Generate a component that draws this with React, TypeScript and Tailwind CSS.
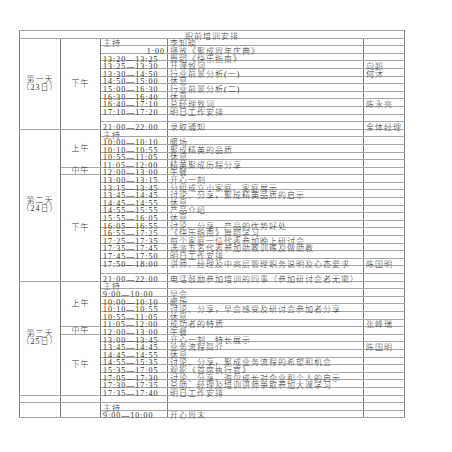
type Row = {
  day?: string[]
  daySpan?: number
  period?: string
  periodSpan?: number
  time: string
  right?: boolean
  task: string
  who?: string
}

// 职前培训日程
const rows: Row[] = [
  { day: ["第一天", "（23日）"], daySpan: 12, period: "下午", periodSpan: 12, time: "主持", task: "李知晓" },
  { time: "1:00", right: true, task: "播放《聚成周年庆典》" },
  { time: "13:20—13:25", task: "舞蹈《快乐指南》" },
  { time: "13:25—13:30", task: "开课致词", who: "向超" },
  { time: "13:30—14:50", task: "行业前景分析(一)", who: "何沐" },
  { time: "14:50—15:00", task: "休息" },
  { time: "15:00—16:30", task: "行业前景分析(二)" },
  { time: "16:30—16:40", task: "休息" },
  { time: "16:40—17:10", task: "总经理致词", who: "陈永亮" },
  { time: "17:10—17:20", task: "明日工作安排" },
  { time: "", task: "" },
  { time: "21:00—22:00", task: "录取通知", who: "全体经理" },

  { day: ["第二天", "（24日）"], daySpan: 20, period: "上午", periodSpan: 5, time: "主持", task: "" },
  { time: "10:00—10:10", task: "暖场" },
  { time: "10:10—10:55", task: "聚成精英的品质" },
  { time: "10:55—11:05", task: "休息" },
  { time: "11:05—12:00", task: "精英聚成历程分享" },
  { period: "中午", periodSpan: 1, time: "12:00—13:00", task: "午餐" },
  { period: "下午", periodSpan: 14, time: "13:00—13:15", task: "开心一刻" },
  { time: "13:15—13:45", task: "分组成立小家庭、家庭展示" },
  { time: "13:45—14:45", task: "讨论、分享，聚成精英品质的启示" },
  { time: "14:45—14:55", task: "休息" },
  { time: "14:55—15:55", task: "产品介绍" },
  { time: "15:55—16:05", task: "休息" },
  { time: "16:05—16:55", task: "讨论、分享，产品的优势好处" },
  { time: "16:55—17:25", task: "《快乐指南》舞蹈学习" },
  { time: "17:25—17:35", task: "每个家庭一位代表参加晚上研讨会" },
  { time: "17:35—17:45", task: "选派五名代表参加助教训练及做助教" },
  { time: "17:45—17:50", task: "明日工作安排" },
  { time: "17:50—18:00", task: "讲师、经理及中高层管理职务说明及心态要求", who: "陈国明" },
  { time: "", task: "" },
  { time: "21:00—22:00", task: "电话鼓励参加培训的同事（参加研讨会者无需）" },

  { day: ["第三天", "（25日）"], daySpan: 15, period: "上午", periodSpan: 6, time: "主持", task: "" },
  { time: "9:00—10:00", task: "早会" },
  { time: "10:00—10:10", task: "暖场" },
  { time: "10:10—10:55", task: "讨论、分享，早会感受及研讨会参加者分享" },
  { time: "10:55—11:05", task: "休息" },
  { time: "11:05—12:00", task: "成功者的特质", who: "张峰瑞" },
  { period: "中午", periodSpan: 1, time: "12:00—13:00", task: "午餐" },
  { period: "下午", periodSpan: 8, time: "13:00—13:45", task: "开心一刻、特长展示" },
  { time: "13:45—14:45", task: "业务流程简介", who: "陈国明" },
  { time: "14:45—14:55", task: "休息" },
  { time: "14:55—15:35", task: "讨论、分享，聚成业务流程的希望和机会" },
  { time: "15:35—17:05", task: "观影《首席执行官》" },
  { time: "17:05—17:30", task: "讨论、分享，海尔成长对企业和个人的启示" },
  { time: "17:30—17:35", task: "总助、经理及培训讲师争取参加大课学习" },
  { time: "17:35—17:40", task: "明日工作安排" },
  { day: [], daySpan: 1, period: "", periodSpan: 1, time: "", task: "" },

  { day: [], daySpan: 2, period: "", periodSpan: 2, time: "主持", task: "" },
  { time: "9:00—10:00", task: "开心周末" },
]

const cell = "border border-y-[#a6a6a6] border-x-[#7a7a7a] p-0 h-[7.6px] leading-[5px] whitespace-nowrap"

function Txt({ children }: { children: React.ReactNode }) {
  return <span className="inline-block translate-y-[1.5px]">{children}</span>
}

export default function App() {
  return (
    <div className="w-[452px] h-[452px] bg-white pt-[30px] pl-[19px] font-['Liberation_Serif','Noto_Sans_CJK_SC',serif] font-light text-[8px] tracking-[1px] text-[#333]">
      <table className="table-fixed border-collapse w-[385px] border border-[#7a7a7a]">
        <colgroup>
          <col className="w-[41px]" />
          <col className="w-[40px]" />
          <col className="w-[67px]" />
          <col className="w-[196px]" />
          <col className="w-[41px]" />
        </colgroup>
        <tbody>
          <tr className="h-[7.6px]">
            <td colSpan={5} className={`${cell} text-center`}>
              <Txt>职前培训安排</Txt>
            </td>
          </tr>
          {rows.map((r, i) => (
            <tr key={i} className="h-[7.6px]">
              {r.day && (
                <td rowSpan={r.daySpan} className={`${cell} text-center align-middle leading-[8px]`}>
                  {r.day.map((d, j) => (
                    <div key={j}>{d}</div>
                  ))}
                </td>
              )}
              {r.period !== undefined && (
                <td rowSpan={r.periodSpan} className={`${cell} text-center align-middle`}>
                  {r.period}
                </td>
              )}
              <td className={`${cell} px-[2px] ${r.right ? "text-right" : "text-left"}`}>
                <Txt>{r.time}</Txt>
              </td>
              <td className={`${cell} px-[2px]`}>
                <Txt>{r.task}</Txt>
              </td>
              <td className={`${cell} px-[2px]`}>
                <Txt>{r.who ?? ""}</Txt>
              </td>
            </tr>
          ))}
        </tbody>
      </table>
    </div>
  )
}
